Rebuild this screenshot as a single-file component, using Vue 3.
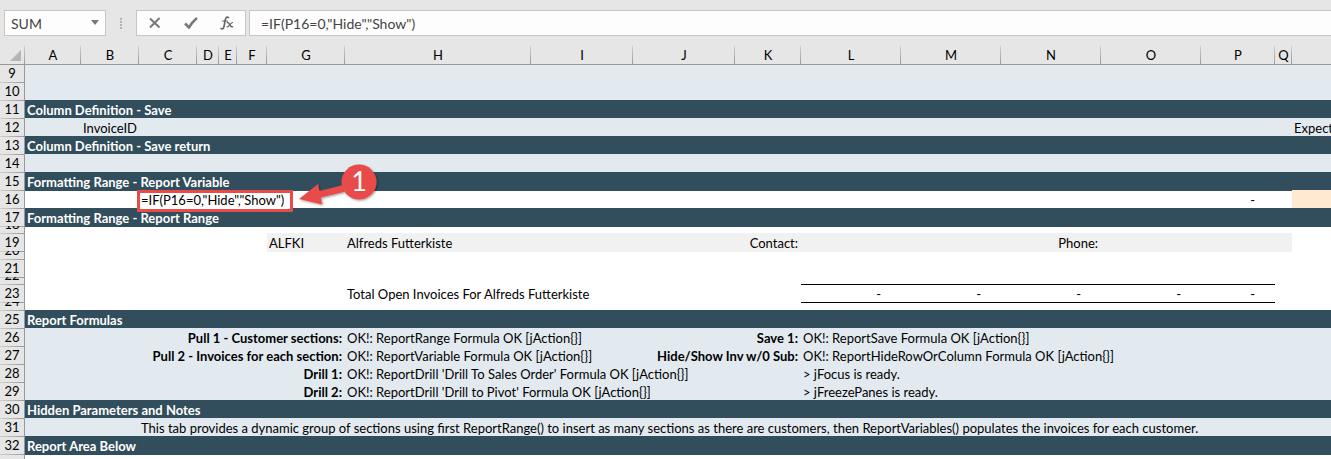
<script setup>
import { ref } from 'vue'

const formula = ref('=IF(P16=0,"Hide","Show")')
const nameBox = ref('SUM')

const columns = [
  ['A', 56], ['B', 58], ['C', 58], ['D', 22], ['E', 18], ['F', 30], ['G', 78],
  ['H', 186], ['I', 102], ['J', 102], ['K', 66], ['L', 100], ['M', 100],
  ['N', 100], ['O', 100], ['P', 74], ['Q', 17], ['', 0],
]
const index = (letter) => (letter === 'R' ? 17 : columns.findIndex((c) => c[0] === letter))

// Each cell is [first column, last column, text, classes]
const source = [
  [9, 'first light', []],
  [10, 'light', []],
  [11, 'dark', [['A', 'P', 'Column Definition - Save']]],
  [12, 'light', [['B', 'C', 'InvoiceID'], ['R', 'R', 'Expect']]],
  [13, 'dark', [['A', 'P', 'Column Definition - Save return']]],
  [14, 'light', []],
  [15, 'dark edge', [['A', 'P', 'Formatting Range - Report Variable']]],
  [16, 'plain', [['C', 'H', '', 'editing'], ['P', 'P', '-', 'amount'], ['R', 'R', '', 'peach']]],
  [17, 'dark edge', [['A', 'P', 'Formatting Range - Report Range']]],
  [18, 'plain thin', []],
  [19, 'plain', [['G', 'G', 'ALFKI', 'grey'], ['H', 'I', 'Alfreds Futterkiste', 'grey'], ['J', 'K', 'Contact:', 'grey right'], ['L', 'N', 'Phone:', 'grey right'], ['O', 'Q', '', 'grey']]],
  [20, 'plain slim', []],
  [21, 'plain', []],
  [22, 'plain thin', []],
  [23, 'plain', [['H', 'K', 'Total Open Invoices For Alfreds Futterkiste'], ...['L', 'M', 'N', 'O', 'P'].map((c) => [c, c, '-', 'amount ruled'])]],
  [24, 'plain slim', []],
  [25, 'dark', [['A', 'P', 'Report Formulas']]],
  [26, 'light', [['A', 'G', 'Pull 1 - Customer sections:', 'right bold'], ['H', 'I', 'OK!: ReportRange Formula OK [jAction{}]'], ['J', 'K', 'Save 1:', 'right bold'], ['L', 'P', 'OK!: ReportSave Formula OK [jAction{}]']]],
  [27, 'light', [['A', 'G', 'Pull 2 - Invoices for each section:', 'right bold'], ['H', 'I', 'OK!: ReportVariable Formula OK [jAction{}]'], ['J', 'K', 'Hide/Show Inv w/0 Sub:', 'right bold'], ['L', 'P', 'OK!: ReportHideRowOrColumn Formula OK [jAction{}]']]],
  [28, 'light', [['A', 'G', 'Drill 1:', 'right bold'], ['H', 'K', "OK!: ReportDrill 'Drill To Sales Order' Formula OK [jAction{}]"], ['L', 'P', '> jFocus is ready.']]],
  [29, 'light', [['A', 'G', 'Drill 2:', 'right bold'], ['H', 'K', "OK!: ReportDrill 'Drill to Pivot' Formula OK [jAction{}]"], ['L', 'P', '> jFreezePanes is ready.']]],
  [30, 'dark', [['A', 'P', 'Hidden Parameters and Notes']]],
  [31, 'light', [['C', 'R', 'This tab provides a dynamic group of sections using first ReportRange() to insert as many sections as there are customers, then ReportVariables() populates the invoices for each customer.']]],
  [32, 'dark edge', [['A', 'P', 'Report Area Below']]],
  ['', 'plain last', []],
]

const rows = source.map(([number, tone, list]) => {
  const cells = []
  let at = 0
  for (const [from, to, text, cls = ''] of list) {
    const start = index(from)
    if (start > at) cells.push({ span: start - at, text: '', cls: '' })
    cells.push({ span: index(to) - start + 1, text, cls })
    at = index(to) + 1
  }
  if (at < columns.length) cells.push({ span: columns.length - at, text: '', cls: '' })
  return { number, tone, cells }
})
</script>

<template>
  <main class="app">
    <div class="toolbar">
      <div class="namebox">
        <input v-model="nameBox" aria-label="Name box" />
        <button type="button" aria-label="Open name list">
          <svg width="8" height="5" viewBox="0 0 8 5"><path d="M0 0h8L4 5z" fill="#777" /></svg>
        </button>
      </div>
      <span class="grip"><i></i><i></i><i></i><i></i></span>
      <div class="actions">
        <button type="button" aria-label="Cancel">
          <svg width="12" height="12" viewBox="0 0 12 12"><path d="M1 1.5 10.500 10.500M10.500 1 1 10.500" stroke="#777" stroke-width="2" fill="none" /></svg>
        </button>
        <button type="button" aria-label="Enter">
          <svg width="14" height="12" viewBox="0 0 14 12"><path d="M1 6.500 5 10.500Q8 5 13 1" stroke="#777" stroke-width="2.500" fill="none" /></svg>
        </button>
        <button type="button" aria-label="Insert function">
          <svg width="14" height="14" viewBox="0 0 14 14" fill="none" stroke="#666" stroke-linecap="round">
            <path d="M8.500 1.500C6.500.4 5.600 2 5.200 4L4 10.500C3.600 12.600 2.600 13.400 1 12.500" stroke-width="1.600" />
            <path d="M2.500 5h5" stroke-width="1.200" />
            <path d="M7.500 6.500C9.500 6 9.500 11.500 12.500 10.700" stroke-width="1.500" />
            <path d="M12.500 6.500C10.500 6.500 9.500 11 7 10.800" stroke-width="1.200" />
          </svg>
        </button>
      </div>
      <input v-model="formula" class="formula" aria-label="Formula bar" />
    </div>

    <table class="sheet">
      <colgroup>
        <col class="gutter" />
        <col v-for="(c, i) in columns" :key="i" :style="c[1] ? { width: c[1] + 'px' } : {}" />
      </colgroup>
      <thead>
        <tr>
          <th class="corner" aria-label="Select all">
            <svg width="11" height="11" viewBox="0 0 11 11"><path d="M11 0v11H0z" fill="#b4b4b4" /></svg>
          </th>
          <th v-for="(c, i) in columns" :key="i" scope="col">{{ c[0] }}</th>
        </tr>
      </thead>
      <tbody>
        <tr v-for="(r, n) in rows" :key="n" :class="r.tone">
          <th scope="row"><div class="label">{{ r.number }}</div></th>
          <td v-for="(c, i) in r.cells" :key="i" :colspan="c.span" :class="c.cls">
            <div v-if="c.cls === 'editing'" class="editor">
              <input v-model="formula" aria-label="Cell C16" />
              <svg class="callout" width="90" height="50" viewBox="0 0 90 50">
                <defs>
                  <filter id="soft" x="-20%" y="-20%" width="140%" height="150%">
                    <feDropShadow dx="1" dy="1" stdDeviation="1" flood-opacity=".4" />
                  </filter>
                </defs>
                <g fill="#e84c49" filter="url(#soft)">
                  <path d="M6 37 25 22 26.500 29 50 23 51 30 28 35.500 29 42.500z" />
                  <circle cx="66" cy="20" r="17.500" />
                </g>
                <text x="66" y="29" text-anchor="middle">1</text>
              </svg>
            </div>
            <div v-else class="text">{{ c.text }}</div>
          </td>
        </tr>
      </tbody>
    </table>
  </main>
</template>

<style>
html,
body {
  background: #e6e6e6;
  overflow: hidden;
}
</style>

<style scoped>
.app {
  overflow: hidden;
  font-family: Lato, "Liberation Sans", sans-serif;
  font-size: 13px;
  color: #000;
}

input,
button {
  font: inherit;
  color: inherit;
  border: 0;
  padding: 0;
  margin: 0;
  background: none;
  outline: none;
  min-width: 0;
}

.toolbar {
  display: flex;
  align-items: stretch;
  height: 26px;
  padding: 10px 0 10px 4px;
  font-size: 14px;
  color: #444;
}

.namebox,
.actions,
.formula {
  box-sizing: border-box;
  border: 1px solid #c6c6c6;
  background: #fdfdfd;
}

.namebox {
  display: flex;
  width: 102px;
  padding-left: 6px;
}

.namebox input {
  flex: 1;
}

.namebox button {
  display: flex;
  align-items: center;
  justify-content: center;
  width: 20px;
}

.namebox svg {
  margin-bottom: 2px;
}

.grip {
  display: flex;
  flex-direction: column;
  justify-content: center;
  align-items: center;
  gap: 1px;
  width: 30px;
}

.grip i {
  width: 2px;
  height: 2px;
  background: #b4b4b4;
}

.actions {
  display: flex;
  width: 110px;
  margin-right: 3px;
}

.actions button {
  flex: 1;
  display: flex;
  align-items: center;
  justify-content: center;
}

.toolbar .formula {
  flex: 1;
  border: 1px solid #c6c6c6;
  border-right: 0;
  background: #fdfdfd;
  padding-left: 11px;
}

.sheet {
  width: 100%;
  table-layout: fixed;
  border-collapse: separate;
  border-spacing: 0;
}

.gutter {
  width: 25px;
}

th,
td {
  padding: 0;
  font-weight: 400;
  text-align: left;
  vertical-align: top;
}

thead th {
  height: 18px;
  line-height: 18px;
  text-align: center;
  border-bottom: 1px solid #999;
  background: linear-gradient(#cfcfcf, #999) right / 1px 100% no-repeat;
}

thead th:last-child {
  background: none;
}

.corner svg {
  display: block;
  margin: 4px 0 0 10px;
}

tbody th {
  background: linear-gradient(90deg, #d0d0d0, #999) top / 100% 1px no-repeat #e6e6e6;
  border-right: 1px solid #999;
}

.first th {
  background: #e6e6e6;
}

.label,
.text,
.editor {
  display: flex;
  align-items: flex-end;
  height: 18px;
  line-height: 18px;
  white-space: nowrap;
}

.label {
  justify-content: center;
  overflow: hidden;
}

.text {
  align-items: flex-start;
  line-height: 20px;
  padding: 0 3px 0 2px;
}

.first .label,
.first .text {
  height: 17px;
}

.thin .label,
.thin .text {
  height: 7px;
}

.slim .label,
.slim .text {
  height: 8px;
}

.last .label,
.last .text {
  height: 5px;
}

.light td {
  background: #e2eaf0;
}

.plain td {
  background: #fff;
}

.dark td {
  background: #324e5c;
  color: #fff;
  font-weight: 700;
}

.edge td {
  box-shadow: 0 1px #324e5c;
  position: relative;
}

.plain .grey {
  position: relative;
  background: #f1f1f1;
  box-shadow: 0 1px #f1f1f1;
}

.plain .peach {
  position: relative;
  background: #ffe9d0;
}

.right .text {
  justify-content: flex-end;
}

.bold {
  font-weight: 700;
}

.amount .text {
  justify-content: flex-end;
  padding-right: 20px;
}

.ruled {
  position: relative;
  box-shadow: inset 0 1px #000, 0 1px #000;
}

.editor {
  position: relative;
  z-index: 1;
}

.editor input {
  position: absolute;
  box-sizing: border-box;
  left: -2px;
  top: 0;
  width: 156px;
  height: 22px;
  padding: 0 0 2px 1px;
  border: 3px solid #e84c49;
  background: #fff;
}

.callout {
  position: absolute;
  left: 154px;
  top: -28px;
}

.callout text {
  font-size: 27px;
  fill: #fff;
}
</style>
